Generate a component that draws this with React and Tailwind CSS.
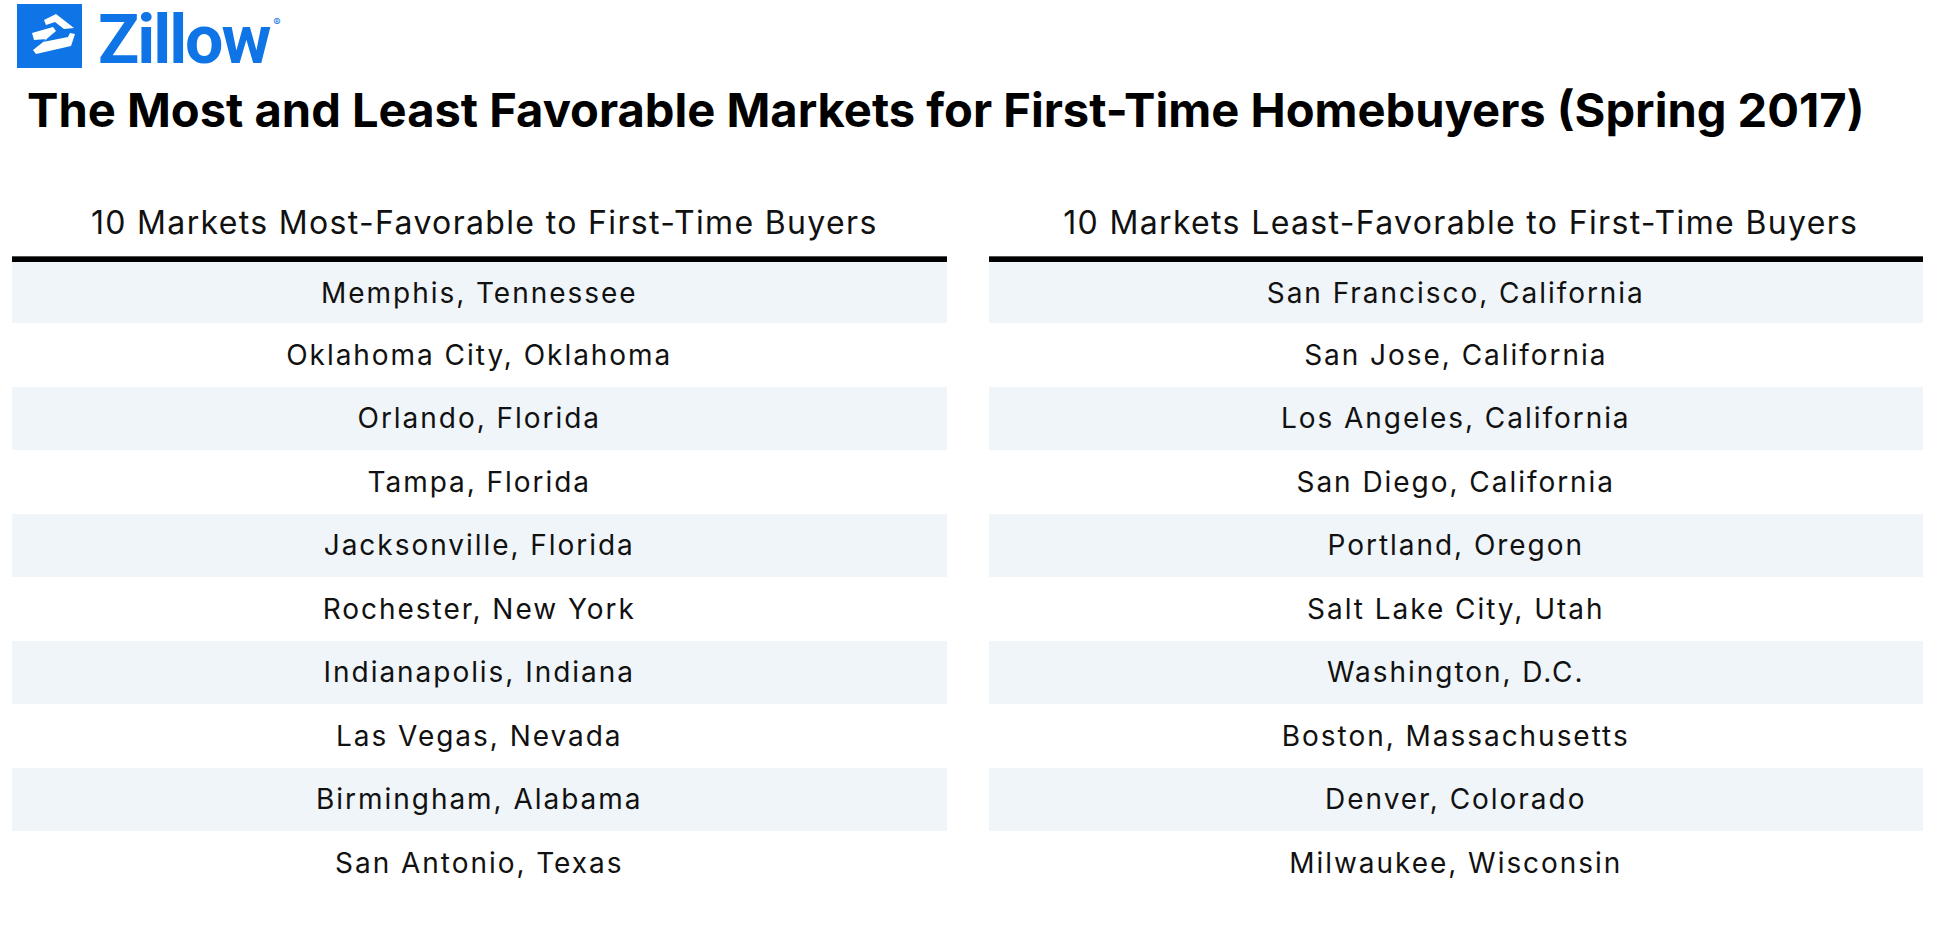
import React from 'react';

const most = [
    'Memphis, Tennessee',
    'Oklahoma City, Oklahoma',
    'Orlando, Florida',
    'Tampa, Florida',
    'Jacksonville, Florida',
    'Rochester, New York',
    'Indianapolis, Indiana',
    'Las Vegas, Nevada',
    'Birmingham, Alabama',
    'San Antonio, Texas',
];

const least = [
    'San Francisco, California',
    'San Jose, California',
    'Los Angeles, California',
    'San Diego, California',
    'Portland, Oregon',
    'Salt Lake City, Utah',
    'Washington, D.C.',
    'Boston, Massachusetts',
    'Denver, Colorado',
    'Milwaukee, Wisconsin',
];

function ZillowLogo() {
    return (
        <div className="flex items-start pl-[17px]">
            <div className="mt-[4px] w-[65px] h-[64px] bg-[#0f74e5] flex items-center justify-center">
                <svg viewBox="0 0 64 64" width="64" height="64">
                    <path d="M26 16 L38 10 L56 24 L46 25 L37 18 L28 21 Z" fill="#fff" />
                    <path d="M14 29 L35 23 L38 27 L25 38 L50 33 L52 29 L57 30 L53 42 L18 50 L15 46 L29 35 L16 36 Z" fill="#fff" />
                </svg>
            </div>
            <div className="ml-[16px] flex items-start">
                <span className="block pr-[2px] text-[68px] leading-[80px] font-bold tracking-[-0.03em] text-[#0f74e5] font-['Roboto',sans-serif]">Zillow</span>
                <span className="ml-[2px] mt-[15px] text-[11px] leading-[14px] text-[#0f74e5] font-['Inter',sans-serif]">®</span>
            </div>
        </div>
    );
}

function MarketColumn({ title, items }) {
    return (
        <div className="flex flex-col">
            <h2 className="pl-[10px] text-center text-[32px] leading-none text-[#111] font-['Inter',sans-serif] tracking-[0.042em]">
                {title}
            </h2>
            <div className="mt-[17px] h-[6px] bg-black border-t border-[#555]"></div>
            <div className="flex flex-col">
                {items.map((city, i) => (
                    <div
                        key={city}
                        className={`flex items-center justify-center text-[28px] leading-none text-[#111] tracking-[0.07em] font-['Inter',sans-serif] ${i === 0 ? 'h-[61px]' : 'h-[63.5px]'} ${i % 2 === 0 ? 'bg-[#f0f5f9]' : 'bg-white'}`}
                    >
                        {city}
                    </div>
                ))}
            </div>
        </div>
    );
}

export default function App() {
    return (
        <div className="w-[1945px] h-[929px] bg-white overflow-hidden">
            <ZillowLogo />
            <h1 className="mt-[6px] pl-[27px] text-[47.1px] leading-none font-bold text-black font-['Inter',sans-serif] whitespace-nowrap">
                The Most and Least Favorable Markets for First-Time Homebuyers (Spring 2017)
            </h1>
            <div className="grid grid-cols-2 gap-[42px] pl-[12px] pr-[22px] mt-[74px]">
                <MarketColumn title="10 Markets Most-Favorable to First-Time Buyers" items={most} />
                <MarketColumn title="10 Markets Least-Favorable to First-Time Buyers" items={least} />
            </div>
        </div>
    );
}
